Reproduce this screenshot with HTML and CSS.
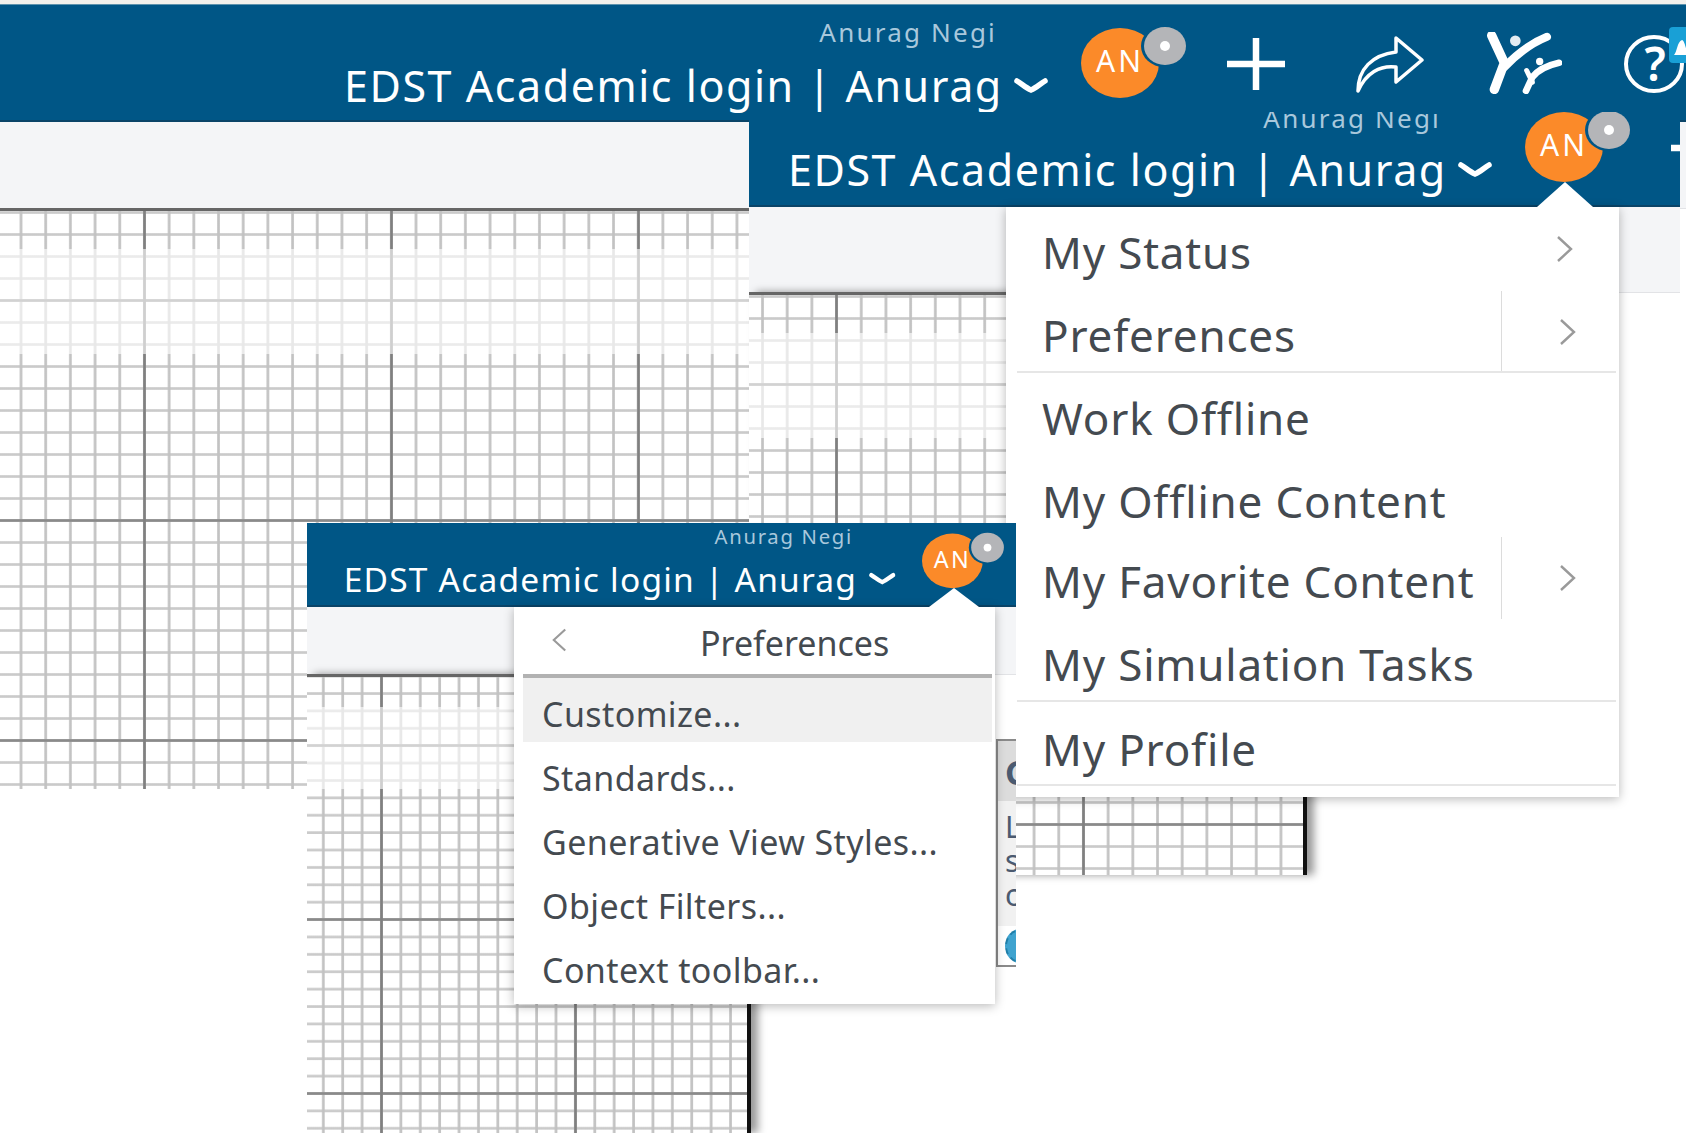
FILE: index.html
```html
<!DOCTYPE html>
<html lang="en">
<head>
<meta charset="utf-8">
<title>Preferences menu</title>
<link rel="stylesheet" href="styles.css">
</head>
<body>
<svg class="defs" width="0" height="0" aria-hidden="true">
  <defs>
    <symbol id="i-avatar" viewBox="0 0 106 74">
      <ellipse cx="39" cy="37" rx="39" ry="35" fill="#fb8a29"/>
      <text x="39" y="46" class="av-text" text-anchor="middle">AN</text>
      <ellipse cx="83" cy="20" rx="23" ry="21" fill="#005686"/>
      <ellipse cx="84" cy="20" rx="21" ry="19" fill="#b4b5b8"/>
      <ellipse cx="84" cy="20" rx="5" ry="5" fill="#fff"/>
    </symbol>
    <symbol id="i-plus" viewBox="0 0 58 52">
      <path d="M29 0v52M0 26h58" stroke="#fff" stroke-width="6.5" fill="none"/>
    </symbol>
    <symbol id="i-share" viewBox="0 0 68 58">
      <path d="M2 56C2 34 16 20 40 17V3L66 25 40 47V32C24 30 10 38 2 56Z" stroke="#fff" stroke-width="3.5" fill="none" stroke-linejoin="round"/>
    </symbol>
    <symbol id="i-people" viewBox="0 0 225 185">
      <path d="M14 10L52 92 22 172" stroke="#fff" stroke-width="28" fill="none" stroke-linecap="round"/>
      <path d="M180 14C140 30 100 55 52 105" stroke="#fff" stroke-width="24" fill="none" stroke-linecap="round"/>
      <circle cx="85" cy="26" r="16" fill="#e4ecf2"/>
      <path d="M216 92C180 100 152 115 136 135L117 176" stroke="#fff" stroke-width="20" fill="none" stroke-linecap="round"/>
      <path d="M119 115L136 150" stroke="#fff" stroke-width="15" fill="none" stroke-linecap="round"/>
      <circle cx="158" cy="88" r="11" fill="#fff"/>
    </symbol>
    <symbol id="i-help" viewBox="0 0 62 66">
      <ellipse cx="30" cy="37" rx="28" ry="27" stroke="#fff" stroke-width="4" fill="none"/>
      <text x="31" y="54" class="help-text" text-anchor="middle">?</text>
      <rect x="45" y="0" width="24" height="36" rx="4" fill="#19a0d6"/>
      <path d="M50 28c3-3 3-13 8-15 3 1 4 10 6 15z" fill="#fff"/>
    </symbol>
    <symbol id="i-chev" viewBox="0 0 34 18">
      <path d="M3 4c5 3 9 7 14 9 5-2 9-6 14-9" stroke="#fff" stroke-width="5.5" fill="none" stroke-linecap="round"/>
    </symbol>
    <symbol id="i-right" viewBox="0 0 17 26">
      <path d="M2 1l13 12L2 25" stroke="#9a9a9a" stroke-width="2.4" fill="none"/>
    </symbol>
  </defs>
</svg>

<section class="shot shot-a">
  <header class="bar">
    <div class="row">
      <div class="ident">
        <div class="name">Anurag Negi</div>
        <div class="title"><span>EDST Academic login | Anurag</span><svg class="chev"><use href="#i-chev"/></svg></div>
      </div>
      <svg class="avatar"><use href="#i-avatar"/></svg>
      <svg class="plus"><use href="#i-plus"/></svg>
      <svg class="share"><use href="#i-share"/></svg>
      <svg class="people"><use href="#i-people"/></svg>
      <svg class="help"><use href="#i-help"/></svg>
    </div>
  </header>
  <div class="toolbar"></div>
  <div class="canvas"><div class="fade"></div></div>
</section>

<section class="shot shot-b">
  <header class="bar">
    <div class="row">
      <div class="ident">
        <div class="name">Anurag Negi</div>
        <div class="title"><span>EDST Academic login | Anurag</span><svg class="chev"><use href="#i-chev"/></svg></div>
      </div>
      <svg class="avatar"><use href="#i-avatar"/></svg>
      <svg class="plus"><use href="#i-plus"/></svg>
    </div>
  </header>
  <div class="toolbar"></div>
  <div class="canvas"><div class="fade"></div></div>
  <div class="caret"></div>
  <nav class="menu">
    <div class="item">My Status<svg class="next"><use href="#i-right"/></svg></div>
    <div class="item split rule">Preferences<svg class="next"><use href="#i-right"/></svg></div>
    <div class="item">Work Offline</div>
    <div class="item">My Offline Content</div>
    <div class="item split lift">My Favorite Content<svg class="next"><use href="#i-right"/></svg></div>
    <div class="item rule">My Simulation Tasks</div>
    <div class="item rule drop">My Profile</div>
  </nav>
</section>

<section class="shot shot-c">
  <header class="bar">
    <div class="row">
      <div class="ident">
        <div class="name">Anurag Negi</div>
        <div class="title"><span>EDST Academic login | Anurag</span><svg class="chev"><use href="#i-chev"/></svg></div>
      </div>
      <svg class="avatar"><use href="#i-avatar"/></svg>
    </div>
  </header>
  <div class="toolbar"></div>
  <div class="canvas"><div class="fade"></div></div>
  <aside class="dialog">
    <div class="dlg-head">C</div>
    <div class="dlg-body">
      <div>L</div>
      <div>s</div>
      <div>c</div>
    </div>
    <div class="dlg-foot"><span class="globe"></span></div>
  </aside>
  <div class="caret"></div>
  <nav class="submenu">
    <div class="sub-head">
      <svg class="back" viewBox="0 0 17 26"><path d="M15 1L2 13l13 12" stroke="#9a9a9a" stroke-width="2.4" fill="none"/></svg>
      <span class="sub-title">Preferences</span>
    </div>
    <div class="sub-item hover">Customize...</div>
    <div class="sub-item">Standards...</div>
    <div class="sub-item">Generative View Styles...</div>
    <div class="sub-item">Object Filters...</div>
    <div class="sub-item">Context toolbar...</div>
  </nav>
</section>
</body>
</html>
```

FILE: styles.css
```css
* { box-sizing: border-box; }
html, body { margin: 0; padding: 0; background: #fff; overflow: hidden; }
body { position: relative; width: 1686px; height: 1133px; font-family: "Noto Sans", "Open Sans", sans-serif; }
.defs { position: absolute; }

/* free-floating pasted screenshots */
.shot { position: absolute; display: flex; flex-direction: column; }
.shot-a { left: 0; top: 0; width: 1686px; height: 789px; padding-top: 5px; background: linear-gradient(#f3f1ec 0, #f3f1ec 4px, #5f93ad 4px, #5f93ad 5px, #fff 5px); }
.shot-b { left: 749px; top: 112px; width: 931px; height: 763px; }
.shot-c { left: 307px; top: 523px; width: 709px; height: 610px; background: #fff; overflow: hidden; }

.bar { flex: none; background: #005686; border-bottom: 2px solid #0a4468; overflow: hidden; }
.shot-a .bar { height: 117px; }
.shot-b .bar { height: 95px; }
.shot-c .bar { height: 84px; }

.row { display: flex; align-items: flex-start; padding-left: 344px; width: 1686px; }
.shot-b .row { margin-top: -23px; padding-left: 39px; width: 931px; }
.shot-c .row { zoom: .78; margin-top: -9px; padding-left: 47px; width: 909px; }

.ident { flex: none; width: 704px; padding-top: 12px; }
.shot-b .ident { padding-top: 14px; }
.name { height: 30px; line-height: 30px; padding-right: 51px; text-align: right; font-size: 26px; letter-spacing: 2.2px; color: #a9c8dc; white-space: nowrap; }
.title { display: flex; align-items: center; margin-top: 14px; height: 50px; font-size: 43px; line-height: 50px; color: #fff; white-space: nowrap; letter-spacing: 1.55px; }
.shot-b .title { margin-top: 12px; }
.title span { width: 656px; flex: none; }
.chev { width: 34px; height: 18px; margin: 0 0 0 14px; flex: none; }
.shot-c .chev { margin-left: 18px; }

.avatar { flex: none; width: 106px; height: 74px; margin: 21px 0 0 33px; }
.shot-c .avatar { margin-left: 38px; }
.av-text { font-family: "Noto Sans", sans-serif; font-size: 30px; letter-spacing: 3px; fill: #fff; }
.help-text { font-family: "Noto Sans", sans-serif; font-size: 46px; font-weight: 600; fill: #fff; }
.plus { flex: none; width: 58px; height: 52px; margin: 33px 0 0 40px; }
.share { flex: none; width: 68px; height: 58px; margin: 30px 0 0 71px; }
.people { flex: none; width: 75px; height: 62px; margin: 27px 0 0 63px; }
.help { flex: none; width: 62px; height: 66px; margin: 22px 0 0 62px; }

.toolbar { flex: none; background: #f4f5f7; border-bottom: 1px solid #e2e3e6; }
.shot-a .toolbar { height: 87px; }
.shot-b .toolbar { height: 86px; }
.shot-c .toolbar { height: 68px; }

/* drawing sheet grid */
.canvas {
  position: relative;
  flex: 1;
  margin-top: -1px;
  border-top: 3px solid #666;
  background-color: #fff;
  background-image:
    linear-gradient(90deg, #0000 0, #808080 .6px, #808080 2.4px, #0000 3px),
    linear-gradient(180deg, #0000 0, #8a8a8a .6px, #8a8a8a 2.4px, #0000 3px),
    linear-gradient(90deg, #0000 0, #c2c2c2 .6px, #c2c2c2 2.4px, #0000 3px),
    linear-gradient(180deg, #0000 0, #cacaca .6px, #cacaca 2.4px, #0000 3px);
  background-size: var(--Mx) 100%, 100% var(--My), var(--mx) 100%, 100% var(--my);
  background-position: var(--Ox) 0, 0 var(--Oy), var(--ox) 0, 0 var(--oy);
}
.shot-a .canvas, .shot-b .canvas { --Mx: 247px; --My: 220px; --mx: 24.7px; --my: 22px; --Oy: 88px; --oy: 22px; }
.shot-a .canvas { width: 749px; --Ox: 143px; --ox: 19.5px; }
.shot-b .canvas { width: 558px; border-right: 4px solid #111; box-shadow: 7px 0 8px rgba(0,0,0,.4); --Ox: 86px; --ox: 12px; }
.shot-c .canvas { width: 444px; border-right: 4px solid #111; box-shadow: 7px 0 8px rgba(0,0,0,.4); --Mx: 194px; --My: 174px; --mx: 19.4px; --my: 17.4px; --Ox: 73px; --ox: 14.8px; --Oy: 67px; --oy: 15px; }

.fade { position: absolute; left: 0; right: 0; background: rgba(255,255,255,.62); }
.shot-a .fade, .shot-b .fade { top: 38px; height: 105px; }
.shot-c .fade { top: 30px; height: 82px; }

/* main user menu */
.caret { position: absolute; background: #fff; clip-path: polygon(50% 0, 100% 100%, 0 100%); z-index: 2; }
.shot-b .caret { left: 788px; top: 70px; width: 56px; height: 25px; }
.shot-c .caret { left: 622px; top: 65px; width: 50px; height: 19px; }

.menu { position: absolute; left: 257px; top: 95px; width: 613px; height: 590px; padding-top: 4px; background: #fff; box-shadow: 0 2px 10px rgba(0,0,0,.28); color: #444a50; font-size: 44px; letter-spacing: .8px; }
.item { position: relative; display: flex; align-items: center; height: 83px; padding: 0 54px 2px 36px; white-space: nowrap; }
.item.lift { margin-top: -3px; }
.item.drop { margin-top: 3px; padding-bottom: 4px; }
.next { width: 17px; height: 26px; margin: 0 -8px 6px auto; flex: none; }
.split .next { margin-right: -11px; }
.split::before { content: ""; position: absolute; left: 495px; top: -3px; bottom: 4px; width: 1px; background: #dcdcdc; }
.rule::after { content: ""; position: absolute; left: 11px; right: 3px; bottom: 4px; height: 2px; background: #e6e6e6; }
.item.drop::after { bottom: 6px; }

/* preferences submenu */
.submenu { position: absolute; left: 207px; top: 84px; width: 481px; height: 397px; background: #fff; box-shadow: 0 2px 10px rgba(0,0,0,.28); color: #444a50; font-size: 34px; letter-spacing: .4px; }
.sub-head { position: relative; display: flex; align-items: center; height: 71px; margin: 0 3px 0 9px; padding: 4px 0 0 29px; border-bottom: 4px solid #b2b2b2; }
.back { width: 15px; height: 24px; flex: none; margin-bottom: 6px; }
.sub-title { margin-left: 133px; white-space: nowrap; letter-spacing: 0; }
.sub-item { display: flex; align-items: center; height: 64px; margin: 0 3px 0 9px; padding: 8px 0 0 19px; white-space: nowrap; }
.sub-item.hover { background: #f0f0f0; }

/* dialog peeking out behind the submenu */
.dialog { position: absolute; left: 689px; top: 216px; width: 60px; height: 228px; border: 2px solid #8a8a8a; background: #fff; color: #4b5a70; font-size: 34px; line-height: 34px; padding-left: 7px; }
.dlg-head { height: 60px; margin-left: -7px; padding: 14px 0 0 7px; background: #dcdcdc; font-weight: 700; }
.dlg-body { height: 125px; margin-left: -7px; padding: 9px 0 0 7px; background: #f1f1f1; font-size: 30px; }
.globe { display: block; width: 30px; height: 34px; margin-top: 3px; border-radius: 50%; background: #3fa3cf; border: 2px dashed #1f7ea8; }
```
